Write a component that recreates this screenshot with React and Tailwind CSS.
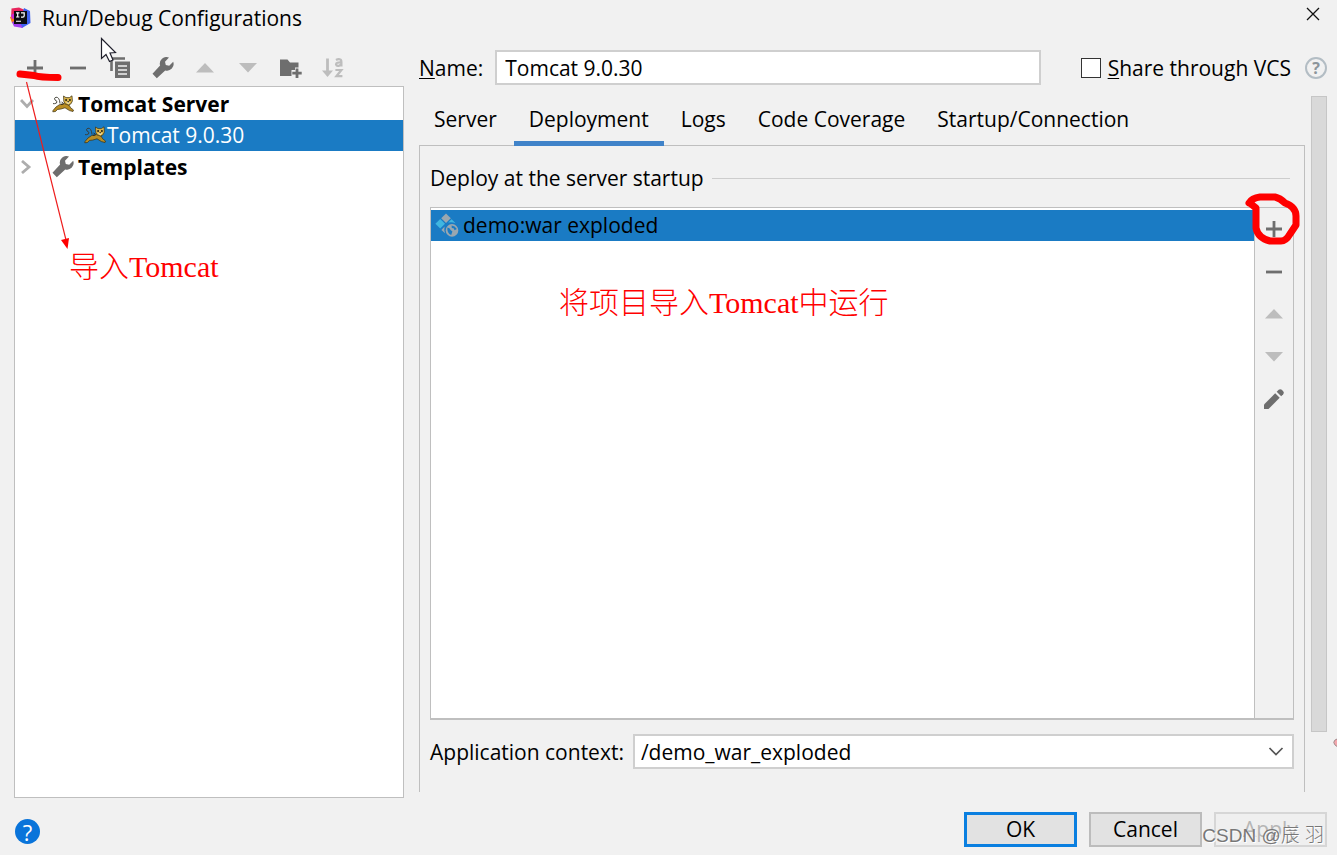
import React from "react";

function IdeLogo() {
  return (
    <svg width="22" height="22" viewBox="0 0 22 22" aria-hidden="true">
      <path d="M1.5 1.5 L9 0.5 L15 3 L12 14 L1 12 Z" fill="#e8255c" />
      <path d="M0 10 L6 8 L9 19 L2 16 Z" fill="#f97a12" />
      <path d="M1 8 L5 6 L6 11 L2 12 Z" fill="#c92bd0" />
      <path d="M14 1 L20 4 L20.5 16 L12 21 L7 17 L12 8 Z" fill="#3f62f0" />
      <path d="M2 15 L8 13 L13 21 L4 19.5 Z" fill="#a03ff0" />
      <rect x="4" y="4" width="13" height="13" fill="#0b0b12" />
      <path d="M6 5.8 H9.4 M7.7 5.8 V10 M6 10 H9.4 M11 5.8 H14.2 V8.8 Q14.2 10.1 12.8 10.1 H11" fill="none" stroke="#fff" strokeWidth="1.2" />
      <path d="M6 14.3 H11" stroke="#ddd" strokeWidth="1.2" />
    </svg>
  );
}

function Plus() {
  return (
    <svg width="22" height="22" viewBox="0 0 22 22" aria-hidden="true">
      <path d="M3 11 H19 M11 3 V19" stroke="#6e6e6e" strokeWidth="2.8" />
    </svg>
  );
}

function Minus() {
  return (
    <svg width="22" height="22" viewBox="0 0 22 22" aria-hidden="true">
      <path d="M3 11 H19" stroke="#6e6e6e" strokeWidth="2.8" />
    </svg>
  );
}

function Up() {
  return (
    <svg width="22" height="22" viewBox="0 0 22 22" aria-hidden="true">
      <path d="M2 15.5 L11 6 L20 15.5 Z" fill="#bdbdbd" />
    </svg>
  );
}

function Down() {
  return (
    <svg width="22" height="22" viewBox="0 0 22 22" aria-hidden="true">
      <path d="M2 6 L11 15.5 L20 6 Z" fill="#bdbdbd" />
    </svg>
  );
}

function Copy() {
  return (
    <svg width="22" height="22" viewBox="0 0 22 22" aria-hidden="true">
      <path d="M2.5 14 V1.5 H16" fill="none" stroke="#6e6e6e" strokeWidth="2.6" />
      <rect x="6" y="4.5" width="15" height="16.5" fill="#6e6e6e" />
      <path d="M9 9 H18 M9 13 H18 M9 17 H18" stroke="#f1f1f1" strokeWidth="1.3" />
    </svg>
  );
}

function Wrench() {
  return (
    <svg width="22" height="22" viewBox="0 0 22 22" aria-hidden="true">
      <path d="M17 0.6 A6.6 6.6 0 0 0 8.1 8.6 L0.5 16.8 L4.8 21.3 L13.2 13.4 A6.6 6.6 0 0 0 21.2 4.8 L17.2 8.8 L13.8 8 L13 4.7 Z" fill="#6e6e6e" />
    </svg>
  );
}

function FolderPlus() {
  return (
    <svg width="24" height="22" viewBox="0 0 24 22" className="shrink-0" aria-hidden="true">
      <path d="M2 2.5 H9.5 L12 5.5 H20.5 V10.5 H17 V13 H13.5 V19 H2 Z" fill="#6e6e6e" />
      <path d="M19 11.5 V21 M14.3 16.2 H23.7" stroke="#6e6e6e" strokeWidth="2.8" />
    </svg>
  );
}

function SortAz() {
  return (
    <svg width="22" height="22" viewBox="0 0 22 22" aria-hidden="true">
      <path d="M5.5 1.5 V17" stroke="#bdbdbd" strokeWidth="2.8" />
      <path d="M0 13.5 L5.5 20 L11 13.5 Z" fill="#bdbdbd" />
      <path d="M14 3 Q16.5 1.4 18.6 2.6 Q19.4 3.4 19.4 5 V9.4 M19.4 5.4 Q14 5 14 7.4 Q14.6 9.4 17.4 8.6 L19.4 7.2" fill="none" stroke="#bdbdbd" strokeWidth="2.2" />
      <path d="M13.4 13 H19.4 L14.4 19.2 H20.4" fill="none" stroke="#bdbdbd" strokeWidth="2.2" />
    </svg>
  );
}

function Pencil() {
  return (
    <svg width="22" height="22" viewBox="0 0 22 22" aria-hidden="true">
      <path d="M1 16.5 L12.2 5.3 L16.7 9.8 L5.5 21 H1 Z" fill="#6e6e6e" />
      <path d="M13.7 3.8 L15.7 1.8 Q17.2 0.6 18.8 1.8 L20.2 3.2 Q21.6 4.8 20.2 6.3 L18.2 8.3 Z" fill="#6e6e6e" />
    </svg>
  );
}

function TomcatIcon() {
  return (
    <svg width="22" height="18" viewBox="0 0 22 18" className="shrink-0" aria-hidden="true">
      <path d="M8 8.5 Q7.5 2 4 2.2 Q1.5 3 3 5 Q6 6 4.5 8 Q2.5 9 1 8.6" fill="none" stroke="#3b3a30" strokeWidth="0.9" />
      <path d="M1 15.5 L4 12 Q7 9 12 8.5 L17 10 Q18 13 21.5 15 L21 16.5 L17.5 15.6 L13 12.8 Q8 14.6 5.5 14.4 L3.5 16.5 L0.8 16.8 Z" fill="#b98d24" stroke="#3a2f10" strokeWidth="0.7" />
      <path d="M11.5 1 L14 2.6 H17.4 L20 0.8 L20.4 6 Q19.5 9.6 16.5 10 Q12.5 9.6 11.8 6.4 Z" fill="#dcb64c" stroke="#3a2f10" strokeWidth="0.7" />
      <path d="M13.2 5 H15 M17 5 H18.8" stroke="#111" strokeWidth="1.4" />
      <path d="M14.2 7.4 L16 6.6 L18 7.4 L16.2 9 Z" fill="#fff3c4" />
      <path d="M15.4 6.8 H17" stroke="#111" strokeWidth="1" />
      <path d="M9.5 7 L11.5 8.2 M9 9.5 L11.5 9.2" stroke="#222" strokeWidth="0.8" />
    </svg>
  );
}

function ArtifactIcon() {
  return (
    <svg width="24" height="24" viewBox="0 0 24 24" className="shrink-0" aria-hidden="true">
      <path d="M11 0.5 L15.8 5.2 L11 10 L6.2 5.2 Z" fill="#9aa7b0" />
      <path d="M5.2 6 L10 10.8 L5.2 15.6 L0.4 10.8 Z" fill="#40b6e0" />
      <path d="M16.6 6.2 L20.6 10.2 Q17 8.8 13.2 9.6 Z" fill="#40b6e0" />
      <path d="M6.4 17 L9.6 13.6 Q8.8 16.8 10 20.2 Z" fill="#9aa7b0" />
      <circle cx="17" cy="17.4" r="6.3" fill="#9aa7b0" />
      <path d="M12.4 14.6 Q15 15 15.6 17 L17.4 18.6 L16.2 22 Q11.8 20.6 12.4 14.6 Z M16.6 12.4 Q20 12.8 21.8 16 L19.6 17.2 L18.6 15.2 L16.8 15 Z" fill="#1a7bc4" />
    </svg>
  );
}

function ToolButton({ label, disabled, children }) {
  return (
    <button type="button" aria-label={label} disabled={disabled} className="flex h-[22px] w-[22px] items-center justify-center">
      {children}
    </button>
  );
}

function TreeChevron({ open }) {
  return (
    <svg width="14" height="14" viewBox="0 0 14 14" className="shrink-0" aria-hidden="true">
      <path d={open ? "M1 3 L7 9.5 L13 3" : "M2 1 L9 7 L2 13"} fill="none" stroke="#adadad" strokeWidth="2.8" />
    </svg>
  );
}

function Sidebar() {
  return (
    <aside className="flex w-[390px] shrink-0 flex-col">
      <div className="ml-[10px] flex h-9 w-[320px] items-center justify-between">
        <ToolButton label="Add"><Plus /></ToolButton>
        <ToolButton label="Remove"><Minus /></ToolButton>
        <ToolButton label="Copy"><Copy /></ToolButton>
        <ToolButton label="Edit templates"><Wrench /></ToolButton>
        <ToolButton label="Move up" disabled><Up /></ToolButton>
        <ToolButton label="Move down" disabled><Down /></ToolButton>
        <ToolButton label="New folder"><FolderPlus /></ToolButton>
        <ToolButton label="Sort" disabled><SortAz /></ToolButton>
      </div>
      <div className="relative flex-1 border border-[#bfbfbf] bg-white pt-[2px]">
        <ul>
          <li className="flex h-[31px] items-center pb-0.5 pl-[5px] font-bold">
            <TreeChevron open />
            <span className="ml-[18px] flex items-center gap-1"><TomcatIcon />Tomcat Server</span>
          </li>
          <li className="flex h-[31px] items-center gap-px bg-[#1a7bc4] pb-0.5 pl-[69px] text-white">
            <TomcatIcon />Tomcat 9.0.30
          </li>
          <li className="flex h-[31px] items-center pl-[5px] font-bold">
            <TreeChevron />
            <span className="ml-[18px] flex items-center gap-1"><Wrench />Templates</span>
          </li>
        </ul>
        <p className="absolute left-[54px] top-[160px] whitespace-nowrap font-['Liberation_Serif','Noto_Sans_CJK_SC',serif] text-[30px] font-light leading-10 text-[#ff0000]">导入Tomcat</p>
      </div>
    </aside>
  );
}

const tabs = ["Server", "Deployment", "Logs", "Code Coverage", "Startup/Connection"];

function DeploymentPanel() {
  return (
    <div className="flex min-w-0 flex-1 flex-col">
      <div role="tablist" className="relative z-10 -mb-px flex h-[50px] gap-0.5">
        {tabs.map((tab) => (
          <button
            key={tab}
            type="button"
            role="tab"
            aria-selected={tab === "Deployment"}
            className={tab === "Deployment" ? "border-b-[5px] border-[#4083c9] px-[15px]" : "border-b-[5px] border-transparent px-[15px]"}
          >
            {tab}
          </button>
        ))}
      </div>
      <section className="flex flex-1 flex-col border border-b-0 border-[#bfbfbf] pb-[23px] pl-[10px] pr-[10px] pt-4">
        <div className="flex h-8 items-center gap-2 pr-1">
          <h2>Deploy at the server startup</h2>
          <span className="h-px flex-1 bg-[#cdcdcd]" />
        </div>
        <div className="mt-[13px] flex flex-1 border border-b-2 border-[#bfbfbf]">
          <div className="relative flex-1 border-r border-[#bfbfbf] bg-white pt-[2px]">
            <ul>
              <li className="flex h-[31px] items-center gap-1 bg-[#1a7bc4] pb-0.5 pl-1">
                <ArtifactIcon />demo:war exploded
              </li>
            </ul>
            <p className="absolute left-[128px] top-[75px] whitespace-nowrap font-['Liberation_Serif','Noto_Sans_CJK_SC',serif] text-[30px] font-light leading-10 text-[#ff0000]">将项目导入Tomcat中运行</p>
          </div>
          <div className="relative flex w-[38px] flex-col items-center pt-[10px]">
            <div className="flex h-[192px] flex-col justify-between">
              <ToolButton label="Add artifact"><Plus /></ToolButton>
              <ToolButton label="Remove artifact"><Minus /></ToolButton>
              <ToolButton label="Move artifact up" disabled><Up /></ToolButton>
              <ToolButton label="Move artifact down" disabled><Down /></ToolButton>
              <ToolButton label="Edit artifact"><Pencil /></ToolButton>
            </div>
            <svg className="pointer-events-none absolute -left-[11px] -top-[16px]" width="60" height="56" viewBox="0 0 60 56" aria-hidden="true">
              <path d="M5 11 Q8 6 16 5 H31 Q36 6 41 11 Q52 15 52 24 V33 L46 42 Q42 49 37 49 H26 Q14 46 12 36 V16 L7 12" fill="none" stroke="#ff0000" strokeWidth="7" strokeLinecap="round" strokeLinejoin="round" />
            </svg>
          </div>
        </div>
        <div className="mt-[14px] flex items-center gap-[9px]">
          <label htmlFor="context">Application context:</label>
          <div className="relative flex-1">
            <select id="context" className="block h-[35px] w-full appearance-none rounded-none border-2 border-[#cfcfcf] bg-white pl-[6px] outline-none">
              <option>/demo_war_exploded</option>
            </select>
            <svg className="pointer-events-none absolute right-[10px] top-[12px]" width="16" height="11" viewBox="0 0 16 11" aria-hidden="true">
              <path d="M1.5 2 L8 8.5 L14.5 2" fill="none" stroke="#555" strokeWidth="1.7" />
            </svg>
          </div>
        </div>
      </section>
    </div>
  );
}

export default function App() {
  return (
    <main className="relative flex min-h-screen flex-col overflow-hidden bg-[#f1f1f1] font-['Open_Sans','Noto_Sans_CJK_SC',sans-serif] text-[21px] leading-7 text-black">
      <header className="flex h-[36px] items-center gap-[10px] pl-[10px] pr-[16px]">
        <IdeLogo />
        <h1 className="flex-1">Run/Debug Configurations</h1>
        <button type="button" aria-label="Close" className="mb-2 flex h-4 w-4 items-center justify-center">
          <svg width="14" height="14" viewBox="0 0 14 14" aria-hidden="true">
            <path d="M1 1 L13 13 M13 1 L1 13" stroke="#111" strokeWidth="1.3" />
          </svg>
        </button>
      </header>

      <div className="mt-[14px] flex flex-1 gap-[15px] pl-[14px] pr-[10px]">
        <Sidebar />
        <div className="flex min-w-0 flex-1 flex-col">
          <div className="flex items-center">
            <label htmlFor="name"><span className="underline decoration-1 underline-offset-2">N</span>ame:</label>
            <input id="name" defaultValue="Tomcat 9.0.30" className="ml-3 h-[35px] min-w-0 flex-1 border-2 border-[#cfcfcf] bg-white px-2 outline-none" />
            <input id="share" type="checkbox" className="ml-10 h-5 w-5 shrink-0 appearance-none border border-[#333] bg-white" />
            <label htmlFor="share" className="ml-[7px]"><span className="underline decoration-1 underline-offset-2">S</span>hare through VCS</label>
            <button type="button" aria-label="About sharing" className="ml-[14px] flex h-[22px] w-[22px] items-center justify-center rounded-full border-2 border-[#b3bdc4] text-base font-bold leading-none text-[#8c959b]">?</button>
          </div>
          <div className="mt-[11px] flex flex-1 gap-[6px] pb-[6px]">
            <DeploymentPanel />
            <div className="mb-[60px] w-4 border border-[#c6c6c6] bg-[#d9d9d9]" />
          </div>
        </div>
      </div>

      <footer className="mt-[14px] flex items-center gap-3 pb-2 pl-[15px] pr-[10px]">
        <button type="button" aria-label="Help" className="mb-[3px] mr-auto flex h-[25px] w-[25px] items-center justify-center self-end rounded-full bg-[#0a74da] text-[22px] leading-none text-white">?</button>
        <button type="button" className="h-[35px] w-[113px] border-[3px] border-[#0a7fe0] bg-[#e2e2e2] leading-none">OK</button>
        <button type="button" className="h-[35px] w-[113px] border-2 border-[#bcbcbc] bg-[#e2e2e2] leading-none">Cancel</button>
        <button type="button" disabled className="h-[35px] w-[113px] border-2 border-[#d6d6d6] bg-[#efefef] leading-none text-[#b5b5b5]">Apply</button>
      </footer>

      <p className="pointer-events-none absolute bottom-[5px] right-[13px] whitespace-nowrap font-['Liberation_Sans','Noto_Sans_CJK_SC',sans-serif] text-[19px] font-light leading-7 text-[#777] [text-shadow:1px_1px_0_#fff]">CSDN @辰 羽</p>

      <svg className="pointer-events-none absolute left-0 top-0" width="140" height="260" viewBox="0 0 140 260" aria-hidden="true">
        <path d="M20 74 L34 75.5 Q40 77.5 58 77.5" fill="none" stroke="#ff0000" strokeWidth="7" strokeLinecap="round" />
        <path d="M26.5 82 L66 240" stroke="#ee1c1c" strokeWidth="1.2" />
        <path d="M61 240 L69 238 L67.5 249 Z" fill="#ff0000" />
        <path d="M101.5 38.5 V58.5 L106 54.5 L109.5 61.5 L113 60 L110 53 L115.5 52.5 Z" fill="#fff" stroke="#20202c" strokeWidth="1.2" />
      </svg>
      <svg className="pointer-events-none absolute bottom-[106px] right-0" width="4" height="12" viewBox="0 0 4 12" aria-hidden="true">
        <path d="M4 2 Q0.8 3 0.8 5.5 Q1.2 8 4 9.5" fill="#f3a6ac" stroke="#a08a8c" strokeWidth="1" />
      </svg>
    </main>
  );
}
